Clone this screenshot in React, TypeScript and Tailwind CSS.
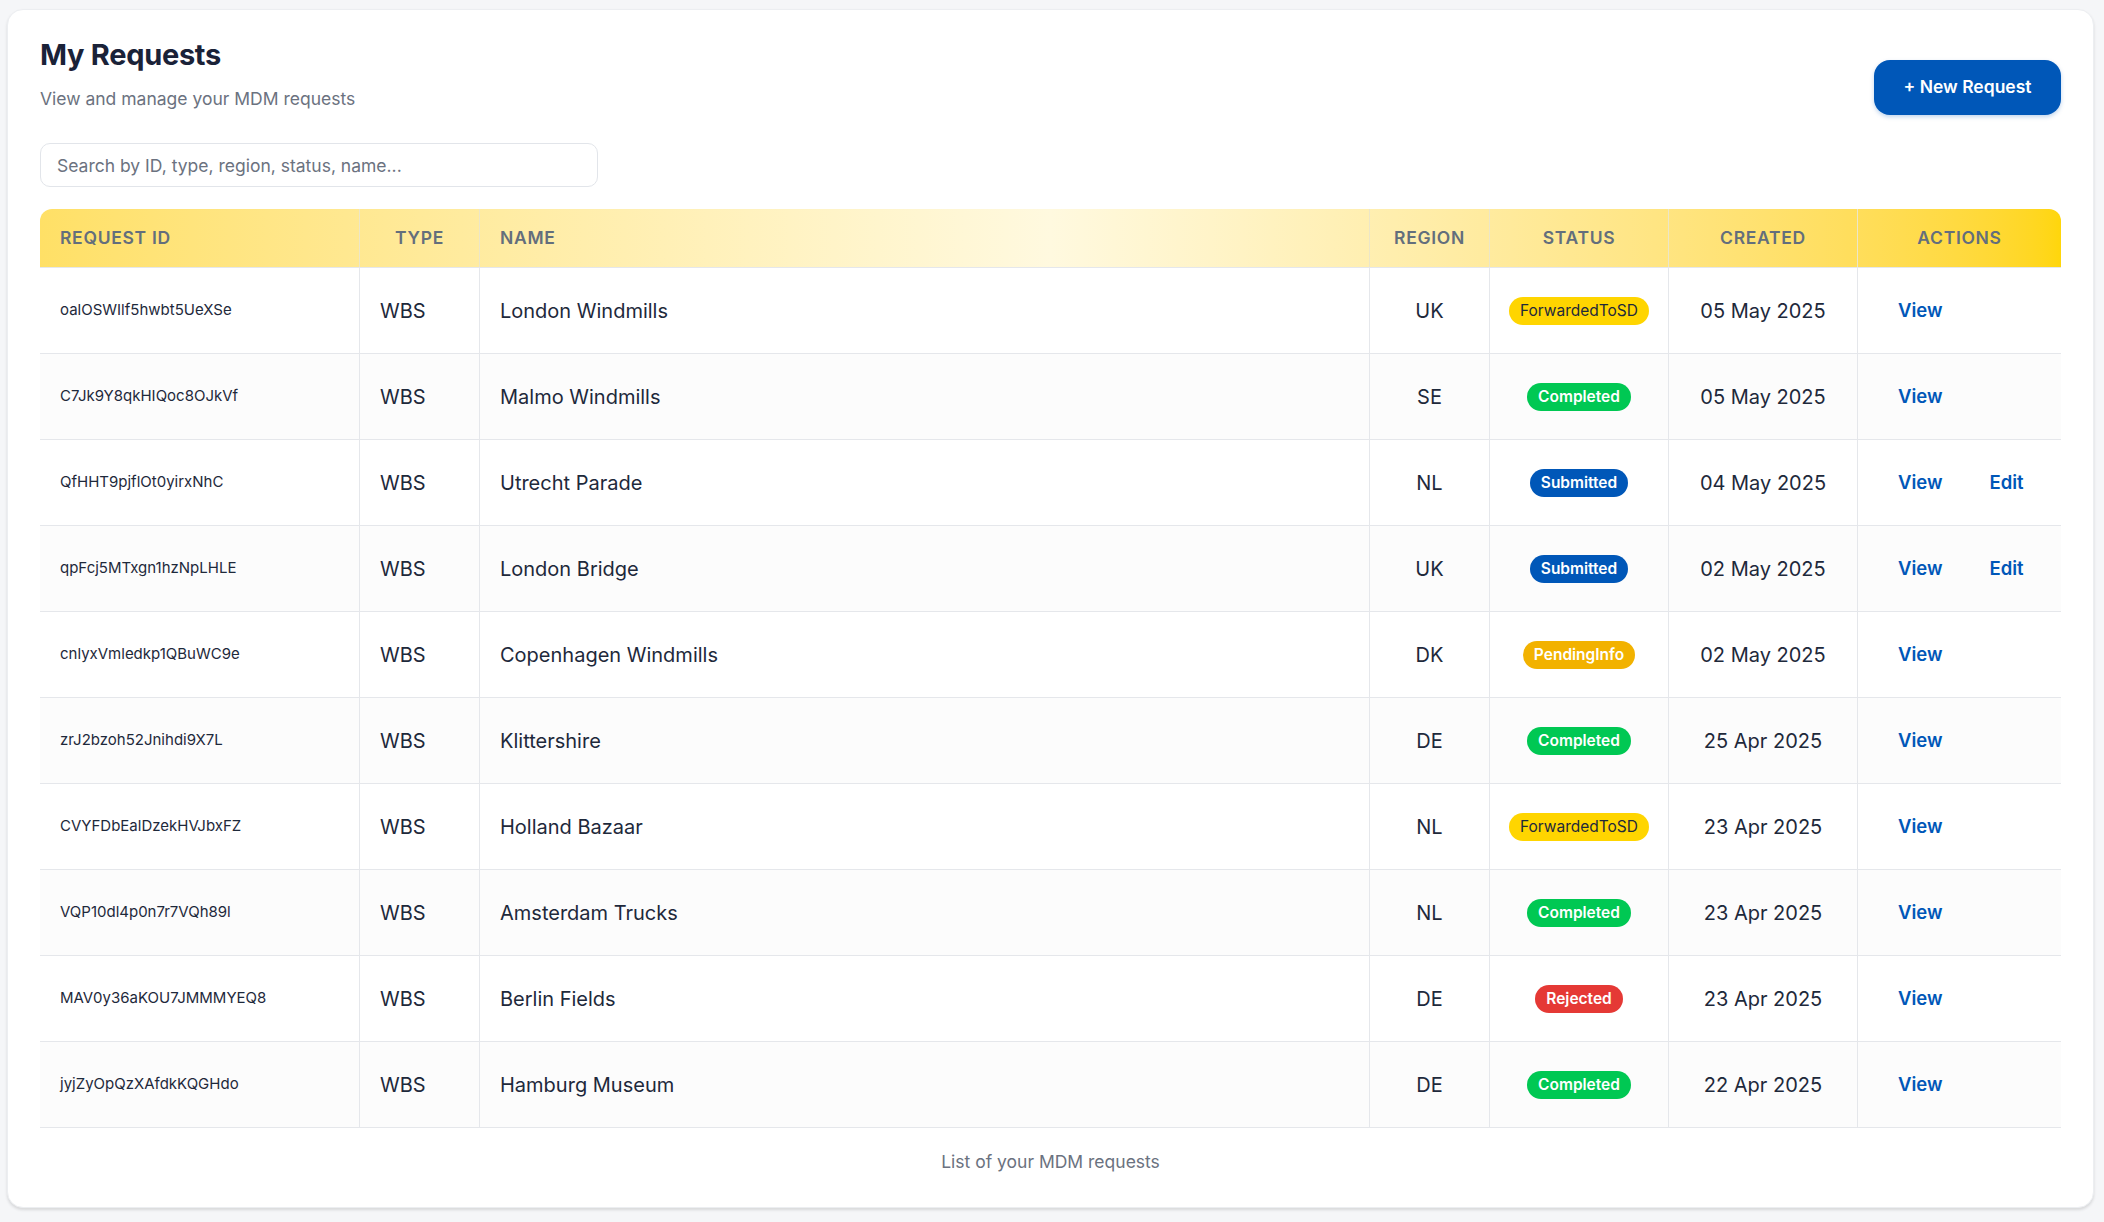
import React from 'react'

type Status = 'ForwardedToSD' | 'Completed' | 'Submitted' | 'PendingInfo' | 'Rejected'

type Request = {
  id: string
  type: string
  name: string
  region: string
  status: Status
  created: string
  editable?: boolean
}

const requests: Request[] = [
  { id: 'oalOSWIlf5hwbt5UeXSe', type: 'WBS', name: 'London Windmills', region: 'UK', status: 'ForwardedToSD', created: '05 May 2025' },
  { id: 'C7Jk9Y8qkHIQoc8OJkVf', type: 'WBS', name: 'Malmo Windmills', region: 'SE', status: 'Completed', created: '05 May 2025' },
  { id: 'QfHHT9pjflOt0yirxNhC', type: 'WBS', name: 'Utrecht Parade', region: 'NL', status: 'Submitted', created: '04 May 2025', editable: true },
  { id: 'qpFcj5MTxgn1hzNpLHLE', type: 'WBS', name: 'London Bridge', region: 'UK', status: 'Submitted', created: '02 May 2025', editable: true },
  { id: 'cnlyxVmledkp1QBuWC9e', type: 'WBS', name: 'Copenhagen Windmills', region: 'DK', status: 'PendingInfo', created: '02 May 2025' },
  { id: 'zrJ2bzoh52Jnihdi9X7L', type: 'WBS', name: 'Klittershire', region: 'DE', status: 'Completed', created: '25 Apr 2025' },
  { id: 'CVYFDbEalDzekHVJbxFZ', type: 'WBS', name: 'Holland Bazaar', region: 'NL', status: 'ForwardedToSD', created: '23 Apr 2025' },
  { id: 'VQP10dl4p0n7r7VQh89l', type: 'WBS', name: 'Amsterdam Trucks', region: 'NL', status: 'Completed', created: '23 Apr 2025' },
  { id: 'MAV0y36aKOU7JMMMYEQ8', type: 'WBS', name: 'Berlin Fields', region: 'DE', status: 'Rejected', created: '23 Apr 2025' },
  { id: 'jyjZyOpQzXAfdkKQGHdo', type: 'WBS', name: 'Hamburg Museum', region: 'DE', status: 'Completed', created: '22 Apr 2025' },
]

const badgeStyles: Record<Status, string> = {
  ForwardedToSD: 'bg-[#ffd500] text-[#1e293b] font-normal',
  Completed: 'bg-[#00c853] text-white font-semibold',
  Submitted: 'bg-[#0057b8] text-white font-semibold',
  PendingInfo: 'bg-[#f2b200] text-white font-semibold',
  Rejected: 'bg-[#e53935] text-white font-semibold',
}

// NAME takes what is left so the table fills the card
const cols = 'grid grid-cols-[319px_120px_1fr_120px_179px_189px_204px]'

function StatusBadge({ status }: { status: Status }) {
  return (
    <span className={`inline-flex items-center h-[28px] px-[11px] rounded-full text-[15.5px] leading-none ${badgeStyles[status]}`}>
      {status}
    </span>
  )
}

export default function App() {
  return (
    <div className="min-h-[1222px] bg-[#f5f6f8] pt-[9px] pl-[7px] pr-[10px] pb-[15px] font-['Inter',sans-serif]">
      <div className="bg-white rounded-[16px] border border-[#eceef1] shadow-[0_2px_3px_rgba(0,0,0,0.12)] px-8 pt-[29px] pb-8">
        <div className="flex justify-between items-start">
          <div>
            <h1 className="text-[29px] leading-[32px] font-bold text-[#1a2238] tracking-[-0.01em]">My Requests</h1>
            <p className="mt-[15px] text-[17.5px] leading-[26px] text-[#6b7280]">View and manage your MDM requests</p>
          </div>
          <button className="mt-[21px] h-[55px] w-[187px] rounded-[16px] bg-[#0057b8] text-white text-[17.5px] font-semibold shadow-[0_2px_4px_rgba(0,87,184,0.25)]">
            + New Request
          </button>
        </div>

        <input
          type="text"
          placeholder="Search by ID, type, region, status, name..."
          className="mt-[28px] block w-[558px] h-[44px] rounded-[10px] border border-[#e2e5ea] px-4 text-[17.5px] text-[#1e293b] placeholder-[#6b7280] outline-none"
        />

        <div className="mt-[22px]">
          <div className={`${cols} h-[59px] rounded-t-[12px] bg-gradient-to-r from-[#ffe066] via-[#fff9df] to-[#ffd60a] border-b border-[#e5e7eb] text-[17.5px] font-semibold uppercase tracking-[0.04em] text-[#636e7c]`}>
            <div className="flex items-center pl-5">Request ID</div>
            <div className="flex items-center justify-center border-l border-[#ece6c8]">Type</div>
            <div className="flex items-center pl-5 border-l border-[#ece6c8]">Name</div>
            <div className="flex items-center justify-center border-l border-[#ece6c8]">Region</div>
            <div className="flex items-center justify-center border-l border-[#ece6c8]">Status</div>
            <div className="flex items-center justify-center border-l border-[#ece6c8]">Created</div>
            <div className="flex items-center justify-center border-l border-[#ece6c8]">Actions</div>
          </div>

          {requests.map((r, i) => (
            <div
              key={r.id}
              className={`${cols} h-[86px] border-b border-[#e5e7eb] text-[20px] text-[#1e293b] ${i % 2 === 1 ? 'bg-[#fcfcfc]' : 'bg-white'}`}
            >
              <div className="flex items-center pl-5 text-[15px]">{r.id}</div>
              <div className="flex items-center pl-5 border-l border-[#e5e7eb]">{r.type}</div>
              <div className="flex items-center pl-5 border-l border-[#e5e7eb]">{r.name}</div>
              <div className="flex items-center justify-center border-l border-[#e5e7eb]">{r.region}</div>
              <div className="flex items-center justify-center border-l border-[#e5e7eb]">
                <StatusBadge status={r.status} />
              </div>
              <div className="flex items-center justify-center border-l border-[#e5e7eb]">{r.created}</div>
              <div className="flex items-center pl-10 gap-[47px] border-l border-[#e5e7eb] text-[18.5px] font-semibold text-[#0057b8]">
                <a href="#">View</a>
                {r.editable && <a href="#">Edit</a>}
              </div>
            </div>
          ))}

          <p className="pt-[21px] text-center text-[17.5px] leading-[26px] text-[#6b7280]">List of your MDM requests</p>
        </div>
      </div>
    </div>
  )
}
